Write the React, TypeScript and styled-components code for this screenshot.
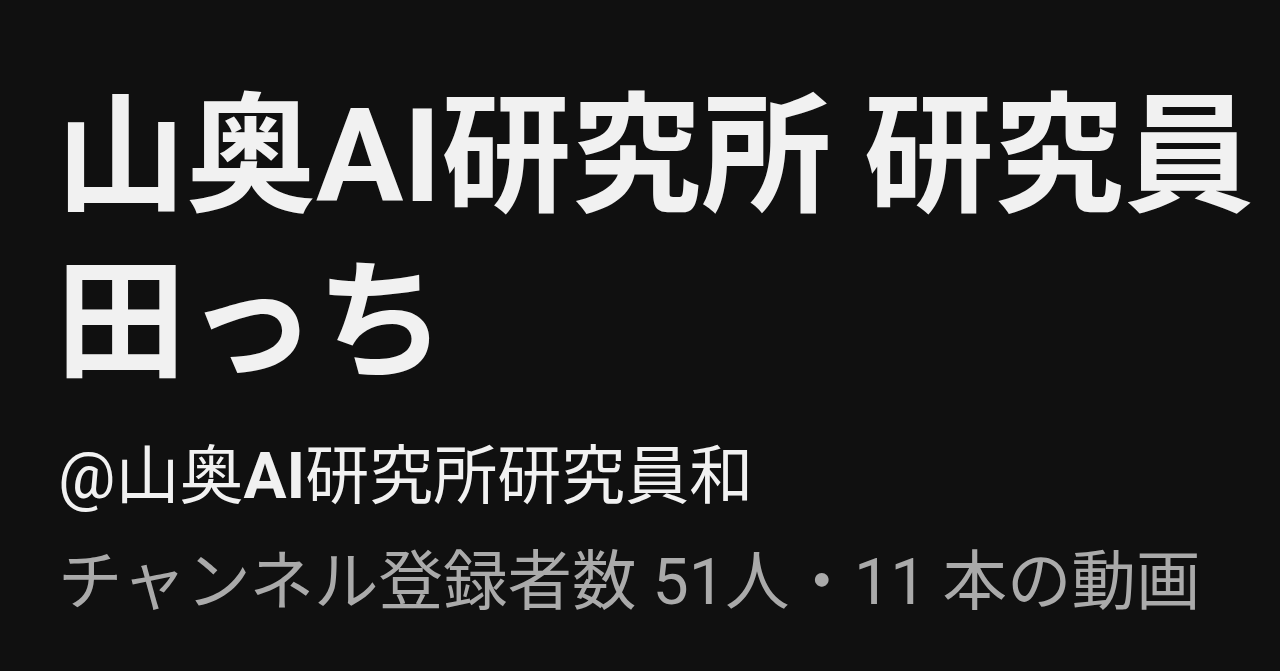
import styled, { createGlobalStyle } from "styled-components";

const GlobalStyle = createGlobalStyle`
  html, body {
    margin: 0;
    padding: 0;
    background: #101010;
  }
`;

const Page = styled.div`
  width: 1280px;
  height: 671px;
  box-sizing: border-box;
  background: #101010;
  padding: 74px 0 0 58px;
  font-family: Roboto, "Noto Sans CJK JP", sans-serif;
  overflow: hidden;
`;

const Title = styled.h1`
  margin: 0 0 0 -2px;
  color: #f1f1f1;
  font-size: 130px;
  line-height: 166px;
  font-weight: 700;
  letter-spacing: 0;
`;

const Handle = styled.div`
  margin-top: 26px;
  color: #f1f1f1;
  font-size: 64px;
  line-height: 90px;
  font-weight: 400;
`;

const Strong = styled.span`
  font-weight: 700;
`;

const Stats = styled.div`
  margin-top: 15px;
  color: #aaaaaa;
  font-size: 64.5px;
  line-height: 90px;
  font-weight: 400;
`;

export default function App() {
  return (
    <>
      <GlobalStyle />
      <Page>
        <Title>
          山奥AI研究所 研究員
          <br />
          田っち
        </Title>
        <Handle>
          @山奥<Strong>AI</Strong>研究所研究員和
        </Handle>
        <Stats>チャンネル登録者数 51人・11 本の動画</Stats>
      </Page>
    </>
  );
}
